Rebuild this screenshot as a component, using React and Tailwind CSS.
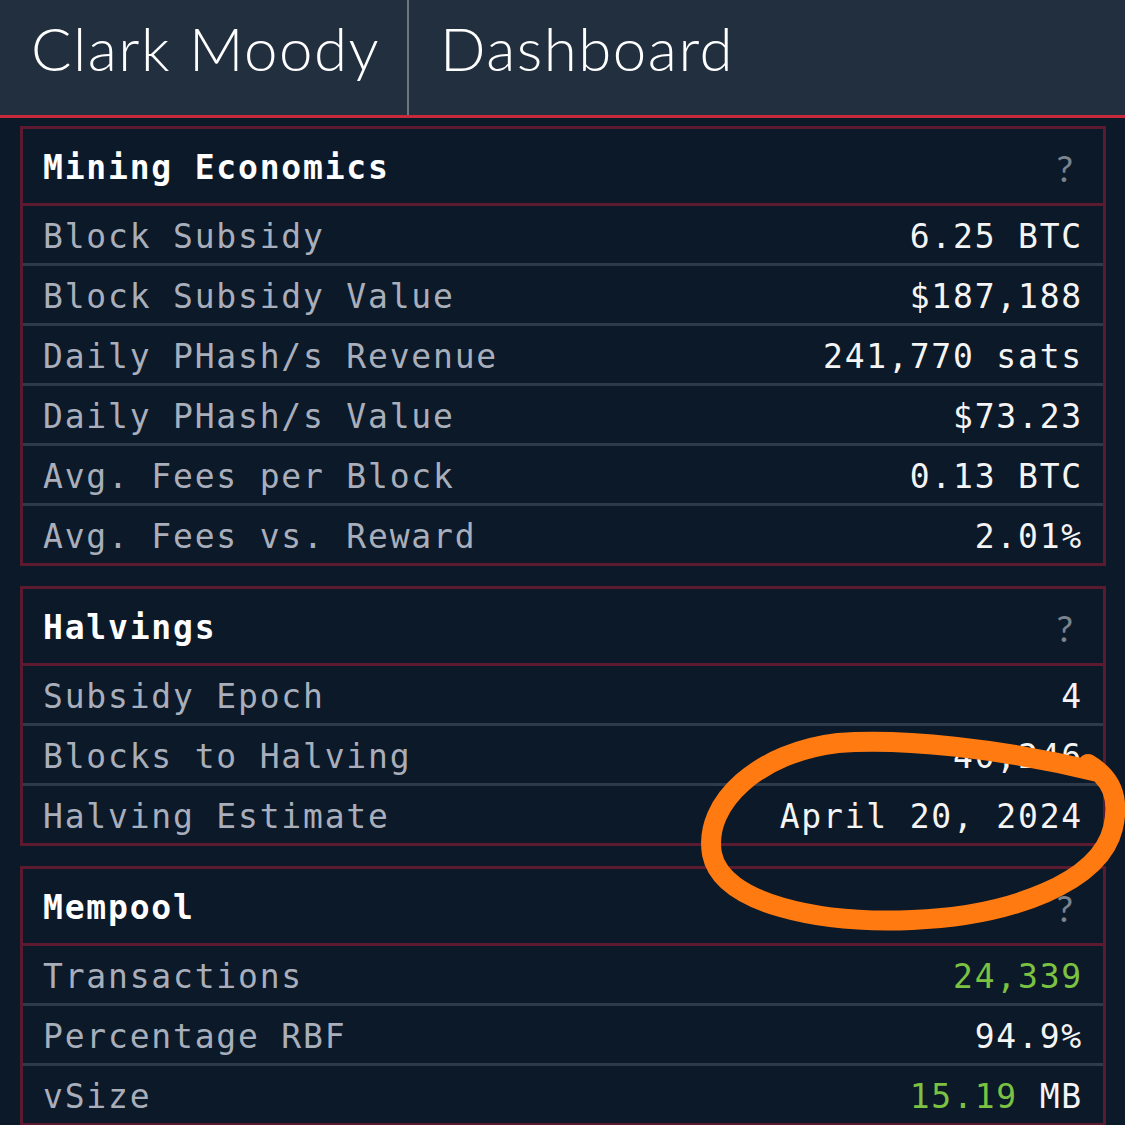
import React from "react";

const sections = [
  {
    title: "Mining Economics",
    rows: [
      { label: "Block Subsidy", value: "6.25 BTC" },
      { label: "Block Subsidy Value", value: "$187,188" },
      { label: "Daily PHash/s Revenue", value: "241,770 sats" },
      { label: "Daily PHash/s Value", value: "$73.23" },
      { label: "Avg. Fees per Block", value: "0.13 BTC" },
      { label: "Avg. Fees vs. Reward", value: "2.01%" },
    ],
  },
  {
    title: "Halvings",
    rows: [
      { label: "Subsidy Epoch", value: "4" },
      { label: "Blocks to Halving", value: "40,246" },
      { label: "Halving Estimate", value: "April 20, 2024" },
    ],
  },
  {
    title: "Mempool",
    rows: [
      { label: "Transactions", value: <span className="text-[#7cc242]">24,339</span> },
      { label: "Percentage RBF", value: "94.9%" },
      {
        label: "vSize",
        value: (
          <>
            <span className="text-[#7cc242]">15.19</span> MB
          </>
        ),
      },
    ],
  },
];

function Panel({ title, rows }) {
  return (
    <div className="border-[3px] border-[#5c1a30]">
      <div className="flex items-center justify-between h-[77px] pt-[4px] pl-[20px] pr-[30px] border-b-[3px] border-[#5c1a30]">
        <span className="font-bold text-white text-[33px] tracking-[1.8px]">{title}</span>
        <span className="text-[#7b838e] text-[37px] font-['Lato',sans-serif]">?</span>
      </div>
      {rows.map((row, i) => (
        <div
          key={row.label}
          className={
            "flex items-center justify-between pt-[5px] pl-[20px] pr-[20px] " +
            (i < rows.length - 1 ? "h-[60px] border-b-[3px] border-[#2c3a4a]" : "h-[57px]")
          }
        >
          <span className="text-[#a9aebb] text-[33px] tracking-[1.8px]">{row.label}</span>
          <span className="text-[#f4f4f4] text-[33px] tracking-[1.8px]">{row.value}</span>
        </div>
      ))}
    </div>
  );
}

export default function App() {
  return (
    <div className="relative w-[1125px] h-[1125px] overflow-hidden bg-[#0c1929] font-['DejaVu_Sans_Mono',monospace]">
      <div className="flex h-[118px] bg-[#212f3e] border-b-[3px] border-[#c92a3b] font-['Lato',sans-serif] font-light text-white text-[60px] tracking-[1.5px]">
        <div className="flex items-center w-[409px] pl-[31px] pb-[20px] border-r-2 border-[#6c7782]">
          Clark Moody
        </div>
        <div className="flex items-center pl-[31px] pb-[20px]">Dashboard</div>
      </div>

      <div className="flex flex-col gap-[20px] pl-[20px] pr-[19px] pt-[8px]">
        {sections.map((s) => (
          <Panel key={s.title} title={s.title} rows={s.rows} />
        ))}
      </div>

      {/* hand-drawn highlight */}
      <svg className="absolute inset-0 pointer-events-none" width="1125" height="1125" viewBox="0 0 1125 1125">
        <path
          d="M 1098 772 C 1000 748, 900 738, 838 743 C 760 752, 703 802, 712 854 C 722 904, 820 924, 912 920 C 1012 916, 1100 882, 1113 828 C 1120 798, 1112 778, 1088 764"
          fill="none"
          stroke="#ff7a10"
          strokeWidth="20"
          strokeLinecap="round"
        />
      </svg>
    </div>
  );
}
